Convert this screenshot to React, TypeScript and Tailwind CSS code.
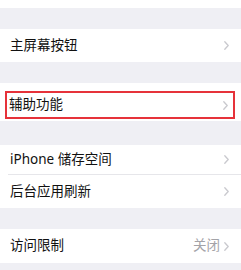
import React from 'react';

const font = { fontFamily: '"Noto Sans", "Noto Sans CJK SC", sans-serif' };

function Chevron() {
  return (
    <svg width="5" height="9" viewBox="0 0 5 9" fill="none" className="shrink-0">
      <path d="M0.8 0.8 L4.2 4.5 L0.8 8.2" stroke="#c9c9ce" strokeWidth="1.3" strokeLinecap="round" strokeLinejoin="round" />
    </svg>
  );
}

function Row({ label, value, h }: { label: string; value?: string; h: string }) {
  return (
    <div className={`${h} bg-white flex items-center justify-between pl-[10px] pr-[12px]`}>
      <span className="text-[13.5px] text-[#111111] leading-none">{label}</span>
      <div className="flex items-center gap-[4px]">
        {value && <span className="text-[13.5px] text-[#a3a3a8] leading-none">{value}</span>}
        <Chevron />
      </div>
    </div>
  );
}

export default function App() {
  return (
    <div className="w-[241px] h-[270px] bg-[#efeff4] flex flex-col overflow-hidden" style={font}>
      <div className="h-[8px] bg-white" />
      <div className="h-[21px]" />
      <Row label="主屏幕按钮" h="h-[33px]" />
      <div className="h-[21px]" />

      {/* highlighted row */}
      <div className="h-[38px] bg-white pt-[8px] pb-[2px] pl-[5px] pr-[6px]">
        <div className="h-full border-2 border-[#e6323a] flex items-center justify-between pl-[2px] pr-[5px]">
          <span className="text-[13.5px] text-[#111111] leading-none">辅助功能</span>
          <Chevron />
        </div>
      </div>

      <div className="h-[24px]" />
      <div className="bg-white">
        <Row label="iPhone 储存空间" h="h-[29px]" />
        <div className="ml-[8px] h-px bg-[#e6e6ea]" />
        <Row label="后台应用刷新" h="h-[33px]" />
      </div>
      <div className="h-[21px]" />
      <Row label="访问限制" value="关闭" h="h-[34px]" />
    </div>
  );
}
